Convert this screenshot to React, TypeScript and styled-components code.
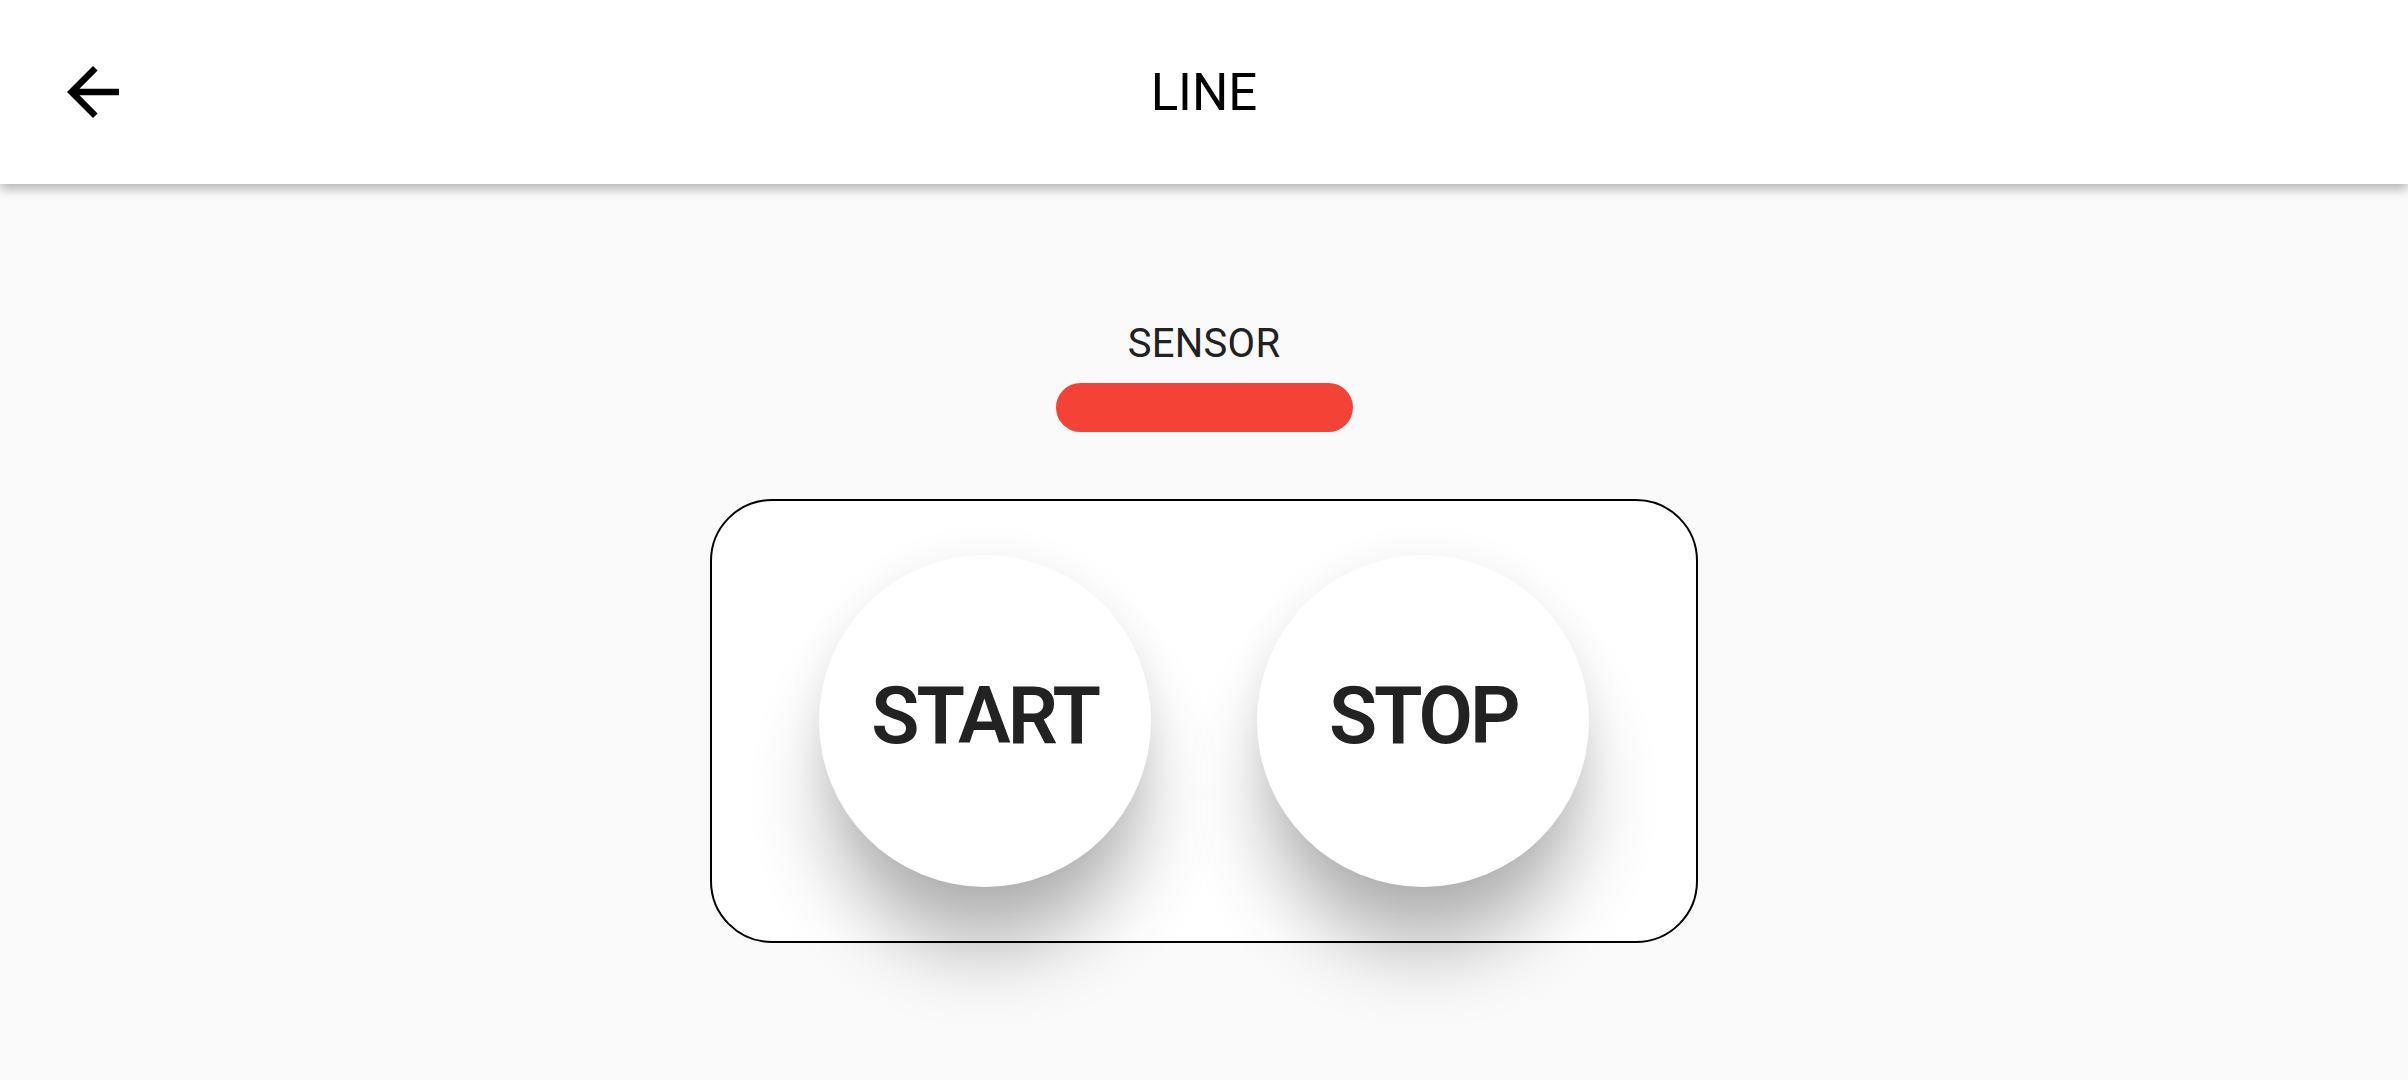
import React from "react";
import styled, { createGlobalStyle } from "styled-components";

const Global = createGlobalStyle`
  html, body { margin: 0; padding: 0; background: #fafafa; }
  body { font-family: Roboto, "Noto Sans", sans-serif; }
  #root { min-height: 1080px; }
`;

const Page = styled.div`
  width: 2408px;
  height: 1080px;
  background: #fafafa;
  display: flex;
  flex-direction: column;
  overflow: hidden;
`;

const Header = styled.header`
  position: relative;
  z-index: 2;
  height: 184px;
  flex: none;
  background: #ffffff;
  box-shadow: 0 5px 10px rgba(0, 0, 0, 0.28);
  display: grid;
  grid-template-columns: 1fr auto 1fr;
  align-items: center;
`;

const BackButton = styled.button`
  justify-self: start;
  margin-left: 54px;
  width: 78px;
  height: 78px;
  padding: 0;
  border: none;
  background: transparent;
  display: flex;
  align-items: center;
  justify-content: center;
  cursor: pointer;
`;

const Title = styled.h1`
  margin: 0;
  font-family: Roboto, sans-serif;
  font-weight: 400;
  font-size: 51px;
  color: #000;
`;

const Content = styled.main`
  flex: 1;
  display: flex;
  flex-direction: column;
  align-items: center;
`;

const SensorLabel = styled.div`
  margin-top: 136px;
  font-family: Roboto, sans-serif;
  font-size: 40px;
  line-height: 47px;
  color: #212121;
  letter-spacing: 0.3px;
`;

const SensorBar = styled.div<{ $color: string }>`
  margin-top: 16px;
  width: 297px;
  height: 49px;
  border-radius: 25px;
  background: ${(p) => p.$color};
`;

const Card = styled.section`
  margin-top: 67px;
  width: 988px;
  height: 444px;
  box-sizing: border-box;
  border: 2px solid #000;
  border-radius: 62px;
  background: #ffffff;
  display: flex;
  align-items: center;
  justify-content: space-evenly;
`;

const RoundButton = styled.button`
  width: 332px;
  height: 332px;
  border-radius: 50%;
  border: none;
  background: #ffffff;
  box-shadow: 0 72px 80px -12px rgba(0, 0, 0, 0.3), 0 0 40px rgba(0, 0, 0, 0.06);
  font-family: Roboto, sans-serif;
  font-weight: 600;
  font-size: 79px;
  letter-spacing: -3px;
  color: #222222;
  padding: 0 0 10px 0;
  cursor: pointer;
`;

const ArrowBack = () => (
  <svg width="78" height="78" viewBox="0 0 24 24" fill="#000">
    <path d="M20 11H7.83l5.59-5.59L12 4l-8 8 8 8 1.41-1.41L7.83 13H20v-2z" />
  </svg>
);

export default function App() {
  return (
    <>
      <Global />
      <Page>
        <Header>
          <BackButton aria-label="back">
            <ArrowBack />
          </BackButton>
          <Title>LINE</Title>
          <div />
        </Header>
        <Content>
          <SensorLabel>SENSOR</SensorLabel>
          <SensorBar $color="#f44336" />
          <Card>
            <RoundButton>START</RoundButton>
            <RoundButton>STOP</RoundButton>
          </Card>
        </Content>
      </Page>
    </>
  );
}
